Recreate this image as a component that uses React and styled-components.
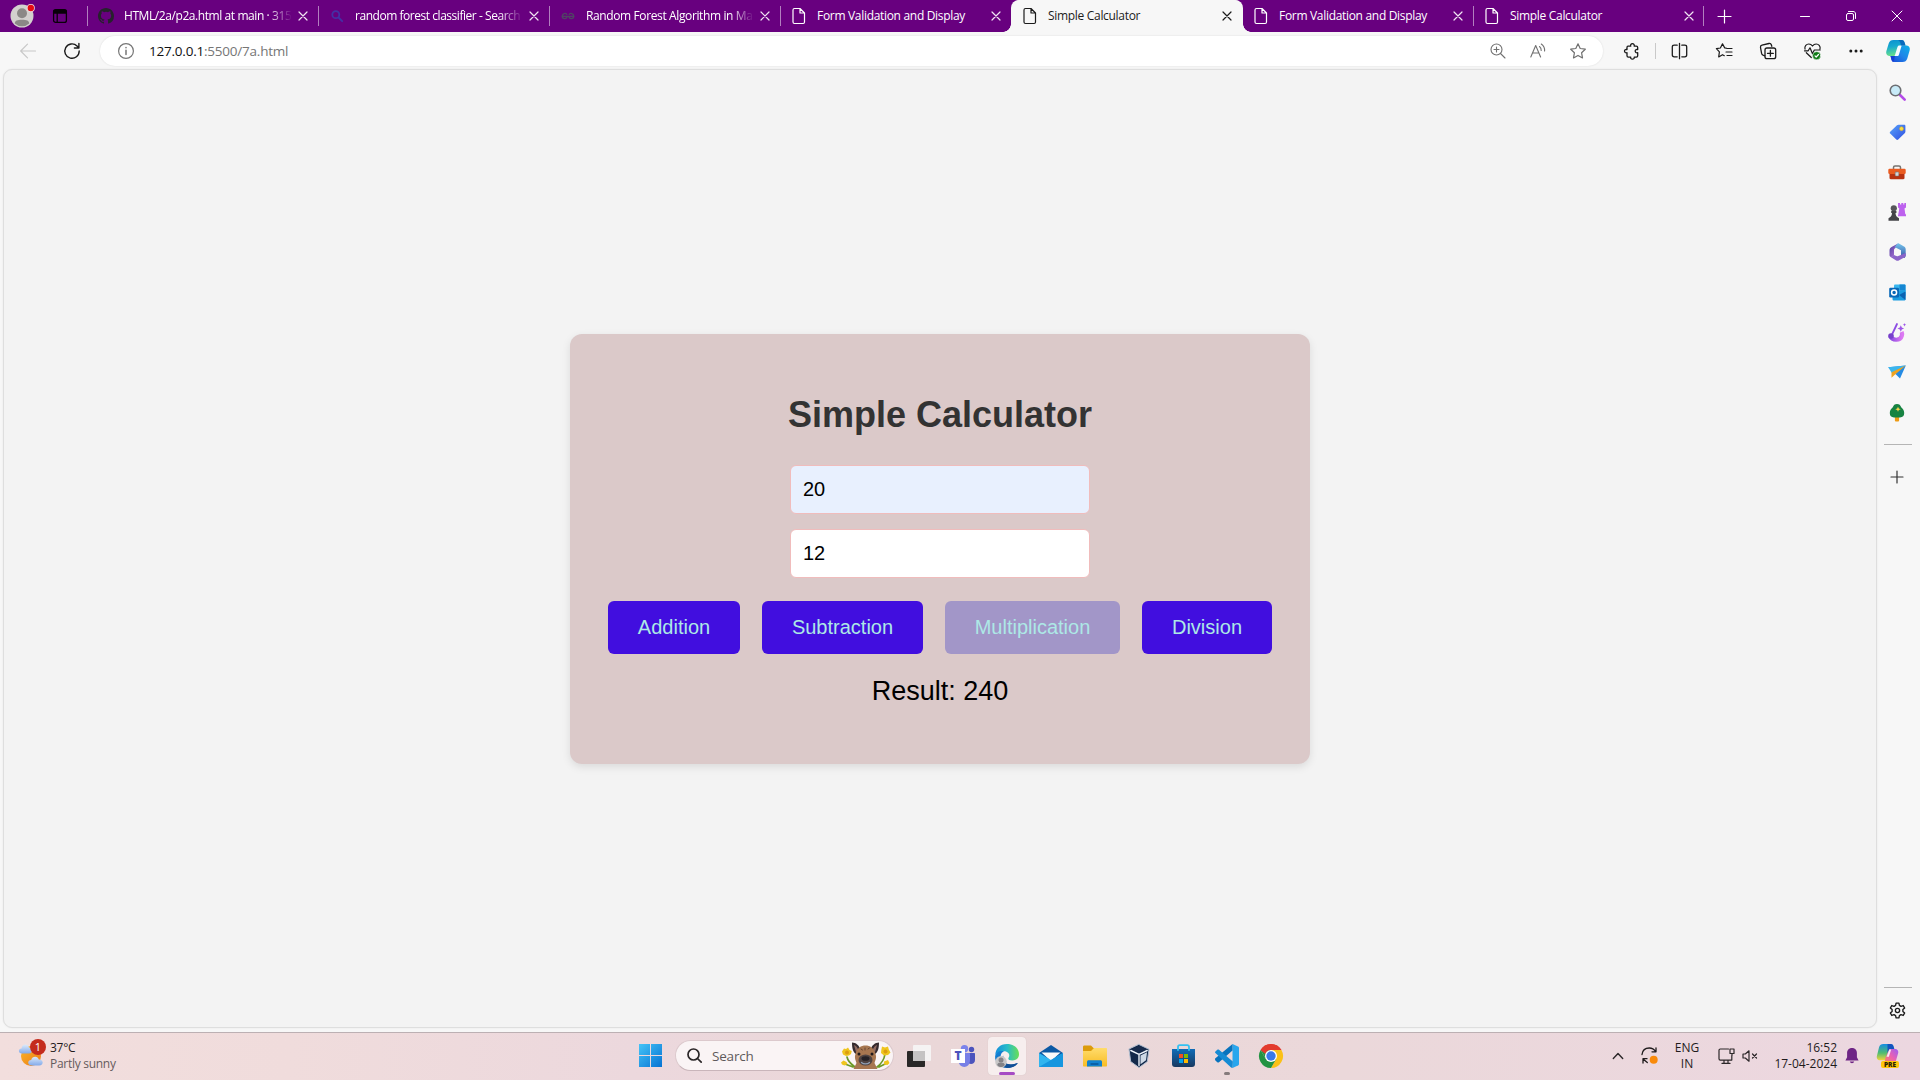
import React from "react";
import styled, { createGlobalStyle, css } from "styled-components";

const GlobalStyle = createGlobalStyle`
  * { box-sizing: border-box; }
  html, body { margin: 0; padding: 0; overflow: hidden; }
  svg { display: block; flex: none; overflow: visible; }
`;

const uiFont = `"Open Sans", "Noto Sans", sans-serif`;
const pageFont = `"Liberation Sans", Arial, sans-serif`;

const Screen = styled.div`
  width: 1920px;
  height: 1080px;
  display: flex;
  flex-direction: column;
  background: #f7f7f7;
  font-family: ${uiFont};
  overflow: hidden;
`;

/* ---------- Tab strip ---------- */
const TabStrip = styled.header`
  height: 32px;
  flex: none;
  display: flex;
  align-items: center;
  background: #68007f;
`;
const ProfileArea = styled.div`
  width: 87px;
  padding-left: 10px;
  display: flex;
  align-items: center;
  gap: 19px;
`;
const Tab = styled.div`
  position: relative;
  width: 231px;
  height: 32px;
  display: flex;
  align-items: center;
  color: ${(p) => (p.$active ? "#1b1b1b" : "#fff")};
  ${(p) => p.$divided && css`
    background: linear-gradient(#b27fbf, #b27fbf) 0 6px / 1px 20px no-repeat;
  `}
  ${(p) => p.$active && css`
    background: #f7f7f7;
    border-radius: 8px 8px 0 0;
    box-shadow: 1px 0 0 #f7f7f7;
    &::before, &::after {
      content: "";
      position: absolute;
      bottom: 0;
      width: 8px;
      height: 8px;
    }
    &::before { left: -8px; background: radial-gradient(circle at 0 0, transparent 7.5px, #f7f7f7 8px); }
    &::after { right: -9px; background: radial-gradient(circle at 100% 0, transparent 7.5px, #f7f7f7 8px); }
  `}
`;
const TabIcon = styled.span`
  width: 37px;
  padding-left: 11px;
  flex: none;
`;
const TabTitle = styled.span`
  width: 167px;
  flex: none;
  white-space: nowrap;
  font-size: 12px;
  line-height: 18px;
  letter-spacing: ${(p) => p.$track}px;
  ${(p) => p.$fade && css`mask-image: linear-gradient(90deg, #000 144px, transparent 168px);`}
`;
const TabClose = styled.span`
  width: 24px;
  display: flex;
  justify-content: center;
`;
const NewTab = styled.div`
  width: 42px;
  margin-left: -1px;
  display: flex;
  justify-content: center;
  background: linear-gradient(#b27fbf, #b27fbf) 0 50% / 1px 20px no-repeat;
  height: 32px;
  align-items: center;
`;
const WindowButtons = styled.div`
  margin-left: auto;
  display: flex;
  svg { margin: 0 15px; }
`;

/* ---------- Toolbar ---------- */
const Toolbar = styled.div`
  height: 37px;
  flex: none;
  display: flex;
  align-items: flex-start;
  padding-top: 4px;
`;
const NavButtons = styled.div`
  width: 100px;
  height: 30px;
  padding-left: 20px;
  display: flex;
  align-items: center;
  gap: 28px;
`;
const AddressBar = styled.div`
  width: 1503px;
  height: 30px;
  border-radius: 15px;
  background: #fff;
  box-shadow: 0 0 2px rgba(0, 0, 0, 0.12);
  padding: 0 17px 0 18px;
  display: flex;
  align-items: center;
`;
const Url = styled.span`
  margin-left: 15px;
  font-size: 13.5px;
  letter-spacing: -0.22px;
  color: #767676;
  b { font-weight: 400; color: #111; }
`;
const AddressActions = styled.div`
  margin-left: auto;
  display: flex;
  gap: 24px;
`;
const ToolbarActions = styled.div`
  flex: 1;
  height: 30px;
  display: flex;
  align-items: center;
  padding-left: 21px;
`;
const ToolSlot = styled.span`
  width: ${(p) => p.$w || 44}px;
`;
const Divider = styled.span`
  width: 1px;
  height: 16px;
  background: #c9c9c9;
  margin-right: 16px;
`;

/* ---------- Body ---------- */
const Body = styled.div`
  flex: 1;
  display: flex;
  min-height: 0;
`;
const Page = styled.main`
  width: 1874px;
  height: 959px;
  margin-left: 3px;
  border: 1px solid #dedede;
  border-radius: 9px;
  background: #f3f3f3;
  box-shadow: 0 0 2px rgba(0, 0, 0, 0.08);
  display: flex;
  align-items: center;
  justify-content: center;
  font-family: ${pageFont};
`;
const Card = styled.section`
  width: 740px;
  height: 430px;
  border-radius: 12px;
  background: #dbc9c9;
  box-shadow: 0 3px 8px rgba(0, 0, 0, 0.1);
  display: flex;
  flex-direction: column;
  align-items: center;
  padding-top: 60px;
`;
const Title = styled.h1`
  margin: 0 0 30px;
  font-size: 36px;
  line-height: 41px;
  font-weight: 700;
  color: #333;
`;
const NumberInput = styled.input`
  width: 300px;
  height: 49px;
  margin: 0 0 15px;
  padding: 0 12px;
  border: 1px solid #f0bcbc;
  border-radius: 6px;
  background: ${(p) => (p.$autofill ? "#e8f0fe" : "#fff")};
  font: 20px ${pageFont};
  color: #000;
  outline: none;
`;
const Operations = styled.div`
  display: flex;
  gap: 22px;
  margin-top: 8px;
`;
const OpButton = styled.button`
  height: 53px;
  padding: 0;
  width: ${(p) => p.$w}px;
  border: 0;
  border-radius: 6px;
  background: ${(p) => (p.$pressed ? "#a296c8" : "#410edf")};
  color: #ade8e6;
  font: 20px ${pageFont};
`;
const Result = styled.div`
  margin-top: 22px;
  font-size: 27px;
  line-height: 31px;
  color: #000;
`;

/* ---------- Sidebar ---------- */
const Sidebar = styled.aside`
  flex: 1;
  padding-left: 7px;
  padding-top: 11px;
  display: flex;
  flex-direction: column;
`;
const SideItem = styled.div`
  width: 28px;
  height: ${(p) => p.$h || 24}px;
  margin-left: -1px;
  margin-bottom: ${(p) => (p.$gap ?? 16)}px;
  flex: none;
  display: flex;
  align-items: center;
  justify-content: center;
`;
const SideLine = styled.div`
  width: 28px;
  height: 1px;
  flex: none;
  margin-top: ${(p) => p.$top || 0}px;
  background: #b5b5b5;
`;
const SideBottom = styled.div`
  margin-top: auto;
  height: 45px;
  display: flex;
  flex-direction: column;
  gap: 10px;
`;

/* ---------- Taskbar ---------- */
const Taskbar = styled.footer`
  height: 48px;
  flex: none;
  display: flex;
  align-items: center;
  padding-bottom: 2px;
  border-top: 1px solid #bcb0b3;
  background: linear-gradient(90deg, #f2dedd 0, #f0dcdc 15%, #ecd8dd 33%, #ead7d8 48%, #ebd8da 70%, #ecd7e0 100%);
`;
const Weather = styled.div`
  width: 639px;
  padding-left: 18px;
  display: flex;
  align-items: center;
  gap: 5px;
  height: 45px;
`;
const Stack = styled.div`
  font-size: 12px;
  line-height: 16px;
  letter-spacing: ${(p) => p.$track || 0}px;
  text-align: ${(p) => p.$align || "left"};
  color: #1f1b1c;
  white-space: nowrap;
`;
const Muted = styled.div`
  color: #655b5c;
`;
const SearchBox = styled.div`
  width: 219px;
  height: 31px;
  margin: 0 13px 0 13px;
  padding: 0 2px 0 11px;
  border-radius: 16px;
  background: #faf4f5;
  border: 1px solid #dcc9cd;
  border-bottom-color: #c9b5ba;
  display: flex;
  align-items: center;
  font-size: 13.5px;
  color: #5f5a5b;
  svg:last-child { margin-left: auto; }
  span { margin-left: 10px; letter-spacing: -0.2px; }
`;
const Apps = styled.div`
  display: flex;
  align-items: center;
  gap: 6px;
  margin-left: -7px;
`;
const AppTile = styled.div`
  position: relative;
  width: 38px;
  height: 38px;
  display: flex;
  align-items: center;
  justify-content: center;
  border-radius: 4px;
  ${(p) => p.$active && css`background: #f7eeee; box-shadow: 0 0 1px #c8b9b9;`}
  ${(p) => p.$bar && css`
    &::after {
      content: "";
      position: absolute;
      bottom: 0;
      left: 50%;
      width: ${p.$bar}px;
      height: 3px;
      margin-left: ${-p.$bar / 2}px;
      border-radius: 2px;
      background: ${p.$active ? "#a64bc4" : "#857b7c"};
    }
  `}
`;
const Tray = styled.div`
  margin-left: auto;
  display: flex;
  align-items: center;
  padding-right: 20px;
`;
const TrayItem = styled.div`
  width: ${(p) => p.$w}px;
  margin-right: ${(p) => p.$gap || 0}px;
  display: flex;
  justify-content: ${(p) => (p.$end ? "flex-end" : "center")};
`;
const PreBadge = styled.span`
  position: absolute;
  left: 5px;
  bottom: -1px;
  width: 18px;
  height: 7px;
  border-radius: 2px;
  background: #ffc60b;
  color: #2b2100;
  font-size: 6.5px;
  font-weight: 800;
  line-height: 7px;
  text-align: center;
`;
const BadgeHost = styled.div`
  position: relative;
  width: 24px;
  height: 23px;
`;
const WeatherIcon = styled.div`
  position: relative;
  width: 27px;
  height: 29px;
  margin-bottom: 5px;
  svg { margin-top: 5px; }
`;
const Count = styled.span`
  position: absolute;
  top: 0;
  left: 12px;
  width: 16px;
  height: 16px;
  border-radius: 50%;
  background: #c42b1c;
  color: #fff;
  font-size: 11px;
  line-height: 16px;
  text-align: center;
`;

/* ---------- Icons ---------- */
const Svg = ({ s = 16, w, h, vb, children, ...rest }) => (
  <svg width={w || s} height={h || s} viewBox={vb || `0 0 ${w || s} ${h || s}`} fill="none" strokeLinecap="round" strokeLinejoin="round" {...rest}>
    {children}
  </svg>
);
const Line = ({ children, c = "#222", sw = 1.2, ...r }) => (
  <Svg stroke={c} strokeWidth={sw} {...r}>{children}</Svg>
);
const CloseIcon = ({ c = "#f0e4f3", s = 8, sw = 1.2 }) => (
  <Line s={s} vb="0 0 8 8" c={c} sw={sw}><path d="M0 0 8 8M8 0 0 8" /></Line>
);
const FileIcon = ({ c = "#fff" }) => (
  <Line w={16} h={16} c={c} sw={1.2}>
    <path d="M3.500.5h5.500L13.500 5v9c0 .9-.5 1.500-1.400 1.500H3.500c-.9 0-1.500-.6-1.500-1.500V2c0-.9.600-1.500 1.500-1.500ZM9 .5V5h4.500" />
  </Line>
);
const GithubIcon = () => (
  <Svg s={16} vb="0 0 16 16">
    <path fill="#26222c" d="M8 0C3.580 0 0 3.580 0 8c0 3.540 2.290 6.530 5.470 7.590.4.070.550-.170.550-.380v-1.490c-2.010.370-2.530-.490-2.690-.940-.090-.230-.480-.940-.820-1.130-.280-.150-.680-.520-.010-.530.630-.010 1.080.580 1.230.820.720 1.210 1.870.870 2.330.660.070-.520.280-.870.510-1.070-1.780-.200-3.640-.890-3.640-3.950 0-.870.310-1.590.820-2.150-.080-.200-.360-1.020.080-2.120 0 0 .670-.210 2.200.820a7.420 7.420 0 0 1 4 0c1.530-1.040 2.200-.820 2.200-.820.440 1.100.160 1.920.080 2.120.510.560.820 1.270.820 2.150 0 3.070-1.870 3.750-3.650 3.950.290.250.540.730.540 1.480v2.200c0 .210.150.460.550.380A8.010 8.010 0 0 0 16 8c0-4.420-3.580-8-8-8Z" />
  </Svg>
);
const BingIcon = () => (
  <Line s={16} c="#4430a5" sw={1.8}><circle cx="6.800" cy="6.700" r="3.500" /><path d="m9.500 9.500 3.700 3.700" /></Line>
);
const GeeksIcon = () => (
  <Line s={16} c="#504464" sw={1.300}>
    <path d="M2 8.300h12M6.800 6.300C5.600 4.900 2.600 5.200 2.200 8c.100 3.500 4.700 3.500 4.900.300M9.200 6.300c1.200-1.400 4.200-1.100 4.600 1.700-.100 3.500-4.700 3.500-4.900.300" />
  </Line>
);
const Avatar = () => (
  <Svg w={24} h={24}>
    <circle cx="12" cy="12" r="11.500" fill="#d3d0ce" />
    <circle cx="12" cy="9.300" r="5" fill="#8b8886" />
    <path d="M4.800 19.500c0-2.800 2.600-3.700 7.200-3.700s7.200.900 7.200 3.700a10.600 10.600 0 0 1-14.400 0Z" fill="#8b8886" />
    <circle cx="20.800" cy="4" r="4" fill="#f4dfe4" />
    <circle cx="20.800" cy="4" r="3.200" fill="#e60b12" />
  </Svg>
);
const WorkspaceIcon = () => (
  <Line s={14} c="#090009" sw={1.300}>
    <rect x=".6" y=".6" width="12.800" height="12.800" rx="2" />
    <path d="M1 1.500h12v2.500H1z" fill="#090009" /><path d="M4.200 4.500V13" />
  </Line>
);
const CopilotIcon = () => (
  <Svg w={24} h={22}>
    <defs>
      <linearGradient id="cpA" x1="0" y1="0" x2=".2" y2="1"><stop stopColor="#0b8fd0" /><stop offset=".45" stopColor="#17a9cf" /><stop offset="1" stopColor="#66e08b" /></linearGradient>
      <linearGradient id="cpB" x1="1" y1="0" x2="0" y2="1"><stop stopColor="#0bb0e8" /><stop offset=".5" stopColor="#2085e8" /><stop offset="1" stopColor="#1746d8" /></linearGradient>
    </defs>
    <path d="M12 0h3.500c2 0 2.700 1 3.200 3l.800 2.500H15L10.500 16H4c-3 0-4.400-2.200-3.600-5L2.700 3.500C3.500 1 5 0 7.500 0Z" fill="url(#cpA)" />
    <path d="M12 22H8.500c-2 0-2.700-1-3.200-3l-.800-3H9L13.800 5.500H20c3 0 4.400 2.200 3.600 5l-2.300 8C20.500 21 19 22 16.500 22Z" fill="url(#cpB)" />
    <path d="M14.500 5.500h-1.200c-1 0-1.500.600-1.900 1.800L9 15c-.2.700-.5 1-1 1h3.200c1 0 1.500-.600 1.800-1.600l2.300-7.700c.2-.7.500-1.200 1-1.200Z" fill="#f7fbff" />
    <path d="M12 0h3.500c2 0 2.700 1 3.200 3l.800 2.500H15c-.6-2.500-1-5-3-5.500Z" fill="#0869bd" />
    <path d="M4.500 16H9c-.8 3-1 5-1.500 6-1.300-.2-1.800-1.200-2.200-3Z" fill="#173ed3" />
  </Svg>
);
const HeartIcon = () => (
  <Line s={17} c="#1b1b1b" sw={1.200}>
    <path d="M1 6.200C.2 2.800 2.600 1 4.800 1c1.700 0 2.900.900 3.700 2 .8-1.100 2-2 3.700-2C14.400 1 16.800 2.800 16 6.200M2.300 9.700l5 4.800M.5 7.800h3.700L6 4.800l2.500 6L10.300 7h5.900" />
    <circle cx="12.600" cy="12.700" r="4" fill="#0f7b16" stroke="#f7f7f7" strokeWidth=".5" />
    <path d="m11 12.800 1.200 1.200 2.300-2.500" stroke="#fff" />
  </Line>
);
const PuzzleIcon = () => (
  <Line w={16} h={16} c="#1b1b1b" sw={1.300}>
    <path d="M4 3.200h2.700C6.300 1.700 7.100.7 8.400.7s2.200 1 1.800 2.500h2.100c.900 0 1.400.5 1.400 1.400v2c-1.600-.4-2.500.3-2.500 1.500s.900 2 2.500 1.600v3.100c0 .9-.5 1.400-1.400 1.400h-2.100c.3 1.200-.6 2-1.800 2s-2-.8-1.700-2H4.400c-.9 0-1.400-.5-1.400-1.400V9.700C1.500 10.100.5 9.300.5 8.100S1.500 6.200 3 6.600V4.600c0-.9.400-1.400 1-1.400Z" />
  </Line>
);
const GearIcon = () => (
  <Line s={17} vb="0 0 24 24" c="#1b1b1b" sw={1.900}>
    <path d="M10 1.500h4l.7 3.300 2.200 1.300 3.200-1.100 2 3.500-2.500 2.200v2.600l2.500 2.200-2 3.500-3.200-1.100-2.200 1.300-.7 3.300h-4l-.7-3.300-2.200-1.300L3.900 19l-2-3.500 2.500-2.200v-2.600L1.900 8.500l2-3.500 3.200 1.100 2.200-1.300Z" />
    <circle cx="12" cy="12" r="3" />
  </Line>
);

const SearchColor = () => (
  <Svg s={17}>
    <path d="m11 11 4.700 4.700" stroke="#b44be8" strokeWidth="2.600" />
    <circle cx="6.500" cy="6.500" r="5.300" fill="#c8ebf8" stroke="#6d6f73" strokeWidth="1.600" />
  </Svg>
);
const TagColor = () => (
  <Svg s={17}>
    <defs><linearGradient id="tag" x1="0" y1="0" x2="1" y2="1"><stop stopColor="#58a4fb" /><stop offset="1" stopColor="#304ee0" /></linearGradient></defs>
    <path d="M9.500.8h5.700c.8 0 1.200.4 1.200 1.200v5.600c0 .5-.2 1-.5 1.300l-6.700 6.700c-.6.600-1.300.6-1.900 0L1.200 9.600c-.6-.6-.6-1.300 0-1.900L8 1.300c.4-.3.9-.5 1.500-.5Z" fill="url(#tag)" />
    <circle cx="12.500" cy="4.700" r="2" fill="#f9df45" stroke="#d5a72e" strokeWidth=".5" />
  </Svg>
);
const ToolboxColor = () => (
  <Svg w={18} h={15}>
    <path d="M5.500 4V2.500c0-.9.500-1.500 1.500-1.500h4c1 0 1.500.600 1.500 1.500V4" stroke="#77736f" strokeWidth="1.500" />
    <path d="M1.500 8h15v5c0 .700-.5 1.200-1.200 1.200H2.700c-.7 0-1.200-.5-1.200-1.200Z" fill="#b83210" />
    <rect x=".3" y="3.700" width="17.400" height="5.200" rx="1.200" fill="#ea5b20" />
    <rect x="7.200" y="7" width="3.600" height="4" rx=".8" fill="#d1d5d8" stroke="#73777a" strokeWidth=".5" />
  </Svg>
);
const ChessColor = () => (
  <Svg w={18} h={18}>
    <path d="M10 0h2v1.500h1.300V0h2v1.500h1V0H18v4.500l-1.500 1 .8 5.700H18v2H9.900L10.500 10l.8-4.500-1.300-1Z" fill="#bd62ee" />
    <circle cx="5.800" cy="5.300" r="3.100" fill="#56565a" />
    <path d="M3.200 8h5.200v2H7.500c.1 2 .7 3.200 2 4.300l1.500 1v2.500H.5v-2.500L2 14.300c1.300-1.100 2-2.300 2-4.300h-.8Z" fill="#444448" />
  </Svg>
);
const M365Color = () => (
  <Svg w={17} h={18}>
    <defs>
      <linearGradient id="mA" x1="0" y1="0" x2="0" y2="1"><stop stopColor="#75c6ed" /><stop offset="1" stopColor="#3654a5" /></linearGradient>
      <linearGradient id="mB" x1="0" y1="0" x2="1" y2="1"><stop stopColor="#4c3f9d" /><stop offset="1" stopColor="#bc78df" /></linearGradient>
    </defs>
    <path d="M9.500.2 3 3.700C1.300 4.700.5 5.700.5 7.500V12c0 1 .500 1.800 1.600 2.300L5 12.600V7.300c0-1 .4-1.700 1.400-2.200Z" fill="url(#mB)" />
    <path d="m9.500.2 5.500 3.300c1.200.7 1.700 1.700 1.700 3v6c0 1-.5 1.800-1.500 2.400L12 12.500V7.300L5.500 4C7 3.300 7 1 9.500.2Z" fill="url(#mA)" />
    <path d="m2 14.300 4.800 2.900c1.200.7 2.200.7 3.400 0l5-2.700c1-.600 1.500-1.400 1.500-2.400v-2L9.300 13c-1 .5-1.800.3-2.700-.2L5 12Z" fill="#8b64c8" />
  </Svg>
);
const OutlookColor = () => (
  <Svg w={17} h={17}>
    <rect x="5" y=".5" width="11.500" height="12" rx="1" fill="#39b6ee" />
    <path d="M10.500.5h5c.7 0 1 .3 1 1v5h-6Z" fill="#1686d2" />
    <path d="M3.500 8.500 16.500 6v9c0 1-.5 1.500-1.500 1.500H5c-1 0-1.500-.5-1.500-1.500Z" fill="#1b9ce0" />
    <path d="m10 11 6.500 5V7.500Z" fill="#0b63b2" />
    <rect x=".2" y="3.700" width="9.800" height="9.800" rx="1.200" fill="#0868b8" />
    <circle cx="5.100" cy="8.600" r="2.500" stroke="#fff" strokeWidth="1.500" />
  </Svg>
);
const DesignerColor = () => (
  <Svg w={18} h={18}>
    <defs><linearGradient id="dg"><stop stopColor="#8849e1" /><stop offset="1" stopColor="#dd79f2" /></linearGradient></defs>
    <path d="M2.300 13c2 5 10 5 11.500-.2.700-2-.2-4-.2-4" stroke="url(#dg)" strokeWidth="4.200" strokeLinecap="butt" />
    <path d="M9 1 4 11.500" stroke="#8c4ce3" strokeWidth="1.800" />
    <circle cx="3" cy="13" r="2.800" fill="#7740cb" />
    <path d="m12.800 2.200 1 2.300 2.300 1-2.300 1-1 2.300-1-2.300-2.300-1 2.300-1ZM16.500 0l.5 1.200 1.200.5-1.200.500-.5 1.200-.5-1.200-1.200-.5L16 1.200Z" fill="#9e55e8" />
  </Svg>
);
const DropColor = () => (
  <Svg w={18} h={14}>
    <path d="M.2 2.300 17.800.5 12 13.500 8.500 10Z" fill="#258be4" />
    <path d="M.2 2.300 17.800.5 3.800 8Z" fill="#3bb6ee" />
    <path d="M17.800.5 3.500 7.200v5.500l3-2.600Z" fill="#eda321" />
  </Svg>
);
const TreeColor = () => (
  <Svg w={16} h={18} vb="0 -0.7 16 18">
    <rect x="5.900" y="12" width="4.200" height="5.800" rx="1" fill="#ed9b15" />
    <path d="M8 .3c2.300 0 3.500 1.200 4.200 3.300 1.800 1.400 3 3.400 3 5.800 0 3-1.400 4.300-4.200 4.300H5c-2.800 0-4.200-1.300-4.200-4.300 0-2.400 1.200-4.400 3-5.800C4.500 1.500 5.700.3 8 .3Z" fill="#178342" />
    <path d="m9 3 .8 1.800 1.900.7-1.900.8L9 8l-.8-1.700-1.900-.8 1.900-.7Z" fill="#f8d54c" />
  </Svg>
);

const WeatherArt = () => (
  <Svg w={26} h={24}>
    <defs>
      <linearGradient id="sun" x1="0" y1="0" x2="1" y2="1"><stop stopColor="#f9b629" /><stop offset="1" stopColor="#ed7b16" /></linearGradient>
      <linearGradient id="cl" x1="0" y1="0" x2="0" y2="1"><stop stopColor="#dbeafb" /><stop offset="1" stopColor="#83aaea" /></linearGradient>
    </defs>
    <circle cx="13" cy="12" r="10" fill="url(#sun)" />
    <path d="M4 9.500c-4 0-4-5-.5-5C4-.5 10-.5 11 3.500c4 .2 4 6 0 6Z" fill="url(#cl)" />
    <path d="M14 21.500c-5 0-4.800-5.500-.8-5.500.8-4.500 7-4.300 7.600-.5 5-.3 5.200 6 .5 6Z" fill="url(#cl)" />
  </Svg>
);
const WindowsIcon = () => (
  <Svg s={23}>
    <defs><linearGradient id="win" x1="0" y1="0" x2="1" y2="1" gradientUnits="objectBoundingBox"><stop stopColor="#45c4f7" /><stop offset="1" stopColor="#0672d3" /></linearGradient></defs>
    <path d="M0 0h11v11H0zM12 0h11v11H12zM0 12h11v11H0zM12 12h11v11H12z" fill="url(#win)" />
  </Svg>
);
const Hyena = () => (
  <Svg w={50} h={27}>
    <path d="M6 15c1 5 4 7 8 10M4 22l8 3M44 12c-1 7-4 10-8 13M46 21l-8 4" stroke="#6c9a27" strokeWidth="1.700" />
    <path d="M3 6.500 5 7l2-1.500L8.500 8l2.300 1-.8 3-2 1.500L5 14l-3-1.500L1 9.500ZM0 20.500l2.500-2 3 1.500 1 2-3 1.500-2.500-1ZM41 4.500l3 1L47 4.500l.8 3 1.700 3-2.500 2.500-4 .5-3-2.500.3-3ZM43 19.500l4-1.500 1.500 3-2 2-3.500-.5Z" fill="#efc51e" />
    <circle cx="6" cy="10.500" r="2" fill="#dc9d10" /><circle cx="44.500" cy="9.500" r="2" fill="#dc9d10" />
    <path d="M11 .5c4 0 7 3 8 6h11c1-3 4-6 8-6 0 6-1 9.500-4 11.500H15c-3-2-4-5.500-4-11.500Z" fill="#352a2e" />
    <path d="M13 3c2 .5 4 3 4.500 6L15 10ZM36 3c-2 .5-4 3-4.500 6l2.500 1Z" fill="#906a62" />
    <path d="M14.500 12C16 6 20 3.500 24.500 3.500S33 6 34.500 12c1.500 4-.5 7-1 9l3 6h-24l3-6c-.5-2-2.500-5-1-9Z" fill="#a77650" />
    <ellipse cx="24.500" cy="18" rx="7" ry="5.500" fill="#504443" />
    <ellipse cx="24.500" cy="16.500" rx="4" ry="2.300" fill="#252126" />
    <circle cx="18" cy="12" r="1.500" fill="#21191a" /><circle cx="31" cy="12" r="1.500" fill="#21191a" />
    <path d="M20.500 20.500c2 1.800 6 1.800 8 0" stroke="#90a0b5" strokeWidth="1.200" />
    <path d="m20 7 1.500 1M27 7l1.500-1M24 6v2" stroke="#664332" />
  </Svg>
);
const TaskViewIcon = () => (
  <Svg w={24} h={22}>
    <rect x="0" y="6" width="18" height="16" rx="1" fill="#292827" />
    <rect x="6" y="0" width="18" height="16" rx="1" fill="#f5f3f3" />
    <path d="M6 6h12v10H7c-.7 0-1-.3-1-1Z" fill="#c5c3c3" />
  </Svg>
);
const TeamsBox = styled.div`
  position: relative;
  width: 24px;
  height: 22px;
`;
const TeamsLetter = styled.span`
  position: absolute;
  left: 0;
  top: 4px;
  width: 14px;
  height: 14px;
  background: #fff;
  color: #4b53bc;
  font-size: 12px;
  font-weight: 800;
  line-height: 14px;
  text-align: center;
`;
const TeamsIcon = () => (
  <TeamsBox>
    <Svg w={24} h={22}>
      <circle cx="20.500" cy="4.500" r="2.700" fill="#4c54bd" /><circle cx="13.500" cy="3.800" r="3.700" fill="#7b83eb" />
      <path d="M15 8h8c.7 0 1 .3 1 1v6c0 5-7 5-8 1Z" fill="#4c54bd" />
      <path d="M8 8h10c.6 0 1 .4 1 1v6c0 9-11 9-11.500 1Z" fill="#777fe6" />
    </Svg>
    <TeamsLetter>T</TeamsLetter>
  </TeamsBox>
);
const EdgeIcon = () => (
  <Svg s={24}>
    <defs>
      <linearGradient id="eA" x1="0" y1=".4" x2="1" y2=".4"><stop stopColor="#168ddb" /><stop offset=".5" stopColor="#28bcc9" /><stop offset="1" stopColor="#69df55" /></linearGradient>
      <linearGradient id="eB" x1="0" y1="0" x2="1" y2="1"><stop stopColor="#1489df" /><stop offset="1" stopColor="#0b468f" /></linearGradient>
    </defs>
    <path d="M.3 11.500C.3 4.500 5 0 12 0c7.500 0 12 4.800 12 10.200 0 4-3 6.300-6.700 6.300-3 0-4-1-4-2 0-.8 1-1.300 1-3 0-2.500-2.500-4.200-5.300-4.200C4.700 7.300.5 10 .3 11.500Z" fill="url(#eA)" />
    <path d="M.1 12.500C.7 8.300 5 6.200 9 7.300c-3.500 1.800-4 5-2.600 8 1.700 4.200 7 6.500 14.600 4.200l1.200.3C19.500 23 16 24 12 24 5 24-.3 18.500.1 12.500Z" fill="url(#eB)" />
    <path d="M8.500 11.500c-2 5 2 9.500 8.500 9 2.200-.2 3.800-.8 5-1.500.5-.3.900.2.600.6C20 23 16.500 24.300 12 23.500 6 21 4.500 15 8.500 11.500Z" fill="#114f96" />
    <circle cx="6" cy="17.800" r="5.800" fill="#c8c7c8" />
    <circle cx="6" cy="16" r="2.500" fill="#858387" /><path d="M2.200 21c0-3.300 7.600-3.300 7.600 0-2 2.700-5.600 2.700-7.600 0Z" fill="#858387" />
  </Svg>
);
const MailIcon = () => (
  <Svg w={24} h={22}>
    <path d="M0 8 12 0l12 8v6H0Z" fill="#0c59a4" />
    <path d="M2.500 7.500h19L12 16Z" fill="#fafafa" />
    <path d="M0 8v14h24V8l-12 7Z" fill="#31b5ef" /><path d="M0 22 12 15 24 8v14Z" fill="#1696df" />
  </Svg>
);
const FolderIcon = () => (
  <Svg w={24} h={22}>
    <defs><linearGradient id="fo" x1="0" y1="0" x2="0" y2="1"><stop stopColor="#ffdc6c" /><stop offset="1" stopColor="#f8bc24" /></linearGradient></defs>
    <path d="M0 2c0-1 .5-1.500 1.500-1.500H8L10.500 3H22v6H0Z" fill="#dc9b0b" />
    <path d="M0 6h8l3-3h12c.7 0 1 .3 1 1v16.500c0 .7-.3 1-1 1H1c-.7 0-1-.3-1-1Z" fill="url(#fo)" />
    <path d="M4 21.500V17c0-1.200.6-1.800 1.800-1.800h11.400c1.200 0 1.800.6 1.800 1.800v4.500Z" fill="#1182cf" /><path d="M8 19h7" stroke="#07579a" strokeWidth="1.300" />
  </Svg>
);
const VBoxIcon = () => (
  <Svg w={22} h={24}>
    <path d="m11 .5 10 4.800-1.700 12.300-8.300 6-8.300-6L1 5.300Z" fill="#13294a" stroke="#b1bed0" />
    <path d="m11 2 7.500 3.500L11 9 3.500 5.500Z" fill="#182c4d" />
    <path d="M2.800 6.500 11 10.300l8.200-3.800M11 10.300V21.500" stroke="#edf3fa" strokeWidth="1.400" />
    <path d="m12.500 11.500 6.500-3.200-1 8-5.500 4Z" fill="#ced9e6" />
  </Svg>
);
const StoreIcon = () => (
  <Svg w={23} h={24}>
    <defs><linearGradient id="st" x1="0" y1="0" x2="0" y2="1"><stop stopColor="#116cb7" /><stop offset="1" stopColor="#183960" /></linearGradient></defs>
    <path d="M0 5h23v15c0 2-1 3-3 3H3c-2 0-3-1-3-3Z" fill="url(#st)" />
    <path d="M6 6V3c0-1.200.6-1.800 1.800-1.800h7.400c1.200 0 1.800.6 1.800 1.800v3" stroke="#35c1f1" strokeWidth="1.800" />
    <path d="M7 10h4v4H7z" fill="#f25022" /><path d="M12 10h4v4h-4z" fill="#7fba00" /><path d="M7 15h4v4H7z" fill="#00a4ef" /><path d="M12 15h4v4h-4z" fill="#ffb900" />
  </Svg>
);
const CodeIcon = () => (
  <Svg s={24} vb="0 0 24 24">
    <path d="m17.500 0 5.500 2.400c.6.300 1 .8 1 1.500v16.200c0 .7-.4 1.200-1 1.500L17.500 24Z" fill="#28a6ed" />
    <path d="M17.500 0 3.200 13.800.4 16.200c-.5-.5-.5-1.100-.3-1.600L17.500 0v6.500L4 18.300c-.5.400-1.200.4-1.700 0l-1.900-1.700c-.5-.5-.5-1.100 0-1.600Z" fill="#0873bd" />
    <path d="m17.500 24 .3-6.500L4 5.700c-.5-.4-1.200-.4-1.700 0L.4 7.400c-.5.500-.5 1.200 0 1.700L15.800 23.200c.5.500 1.100.8 1.700.8Z" fill="#158bd4" />
  </Svg>
);
const ChromeIcon = () => (
  <Svg s={24}>
    <path d="M12 12 1.600 6A12 12 0 0 1 22.400 6Z" fill="#e33b2e" />
    <path d="M12 12V6h10.400A12 12 0 0 1 12 24l5.200-9Z" fill="#fbc116" />
    <path d="m12 12-5.200 3L1.600 6A12 12 0 0 0 12 24l5.200-9Z" fill="#229342" />
    <path d="M1.600 6 6.800 15 12 6Z" fill="#229342" /><path d="M1.600 6A12 12 0 0 1 12 0a12 12 0 0 1 10.400 6H12a6 6 0 0 0-5.600 4Z" fill="#e33b2e" />
    <circle cx="12" cy="12" r="6" fill="#fff" /><circle cx="12" cy="12" r="4.700" fill="#3979e8" />
  </Svg>
);
const CopilotPreview = () => (
  <BadgeHost>
    <Svg w={23} h={20} vb="0 0 24 22">
      <defs>
        <linearGradient id="ppA" x1="0" y1="0" x2="0" y2="1"><stop stopColor="#168de2" /><stop offset=".55" stopColor="#50bc70" /><stop offset="1" stopColor="#f4d53c" /></linearGradient>
        <linearGradient id="ppB" x1="1" y1="0" x2="0" y2="1"><stop stopColor="#9b5ff4" /><stop offset=".5" stopColor="#ed62af" /><stop offset="1" stopColor="#fa8c55" /></linearGradient>
      </defs>
      <path d="M12 0h3.500c2 0 2.700 1 3.200 3l.8 2.500H15L10.500 18H4c-3 0-4.400-2.200-3.600-5L2.700 3.500C3.500 1 5 0 7.500 0Z" fill="url(#ppA)" />
      <path d="M12 22H8.500l1-6L13.800 5.500H20c3 0 4.400 2.200 3.600 5l-2.300 8C20.500 21 19 22 16.500 22Z" fill="url(#ppB)" />
      <path d="M12 0h3.500c2 0 2.700 1 3.200 3l.8 2.500h-5.700L12 10Z" fill="#1454bf" />
      <path d="m14 6-3 8h2.500L16 6Z" fill="#f9eaf4" />
    </Svg>
    <PreBadge>PRE</PreBadge>
  </BadgeHost>
);

const tabs = [
  { title: "HTML/2a/p2a.html at main · 315", icon: <GithubIcon />, divided: true, fade: true, track: -0.42 },
  { title: "random forest classifier - Search", icon: <BingIcon />, divided: true, fade: true, track: -0.46 },
  { title: "Random Forest Algorithm in Ma", icon: <GeeksIcon />, divided: true, fade: true, track: -0.38 },
  { title: "Form Validation and Display", icon: <FileIcon />, divided: true },
  { title: "Simple Calculator", icon: <FileIcon c="#1b1b1b" />, active: true },
  { title: "Form Validation and Display", icon: <FileIcon /> },
  { title: "Simple Calculator", icon: <FileIcon />, divided: true },
];
const sideIcons = [SearchColor, TagColor, ToolboxColor, ChessColor, M365Color, OutlookColor, DesignerColor, DropColor, TreeColor];
const operations = [
  { label: "Addition", w: 132 },
  { label: "Subtraction", w: 161 },
  { label: "Multiplication", w: 175, pressed: true },
  { label: "Division", w: 130 },
];

export default function App() {
  return (
    <Screen>
      <GlobalStyle />
      <TabStrip>
        <ProfileArea><Avatar /><WorkspaceIcon /></ProfileArea>
        {tabs.map((t, i) => (
          <Tab key={i} $active={t.active} $divided={t.divided}>
            <TabIcon>{t.icon}</TabIcon>
            <TabTitle $fade={t.fade} $track={t.track ?? -0.31}>{t.title}</TabTitle>
            <TabClose><CloseIcon c={t.active ? "#1b1b1b" : undefined} /></TabClose>
          </Tab>
        ))}
        <NewTab><Line s={13} c="#fff" sw={1.200}><path d="M6.500 0v13M0 6.500h13" /></Line></NewTab>
        <WindowButtons>
          <Line s={16} c="#fff" sw={1}><path d="M3.500 8.500h9" /></Line>
          <Line s={16} c="#fff" sw={1}><rect x="3.500" y="5.500" width="7" height="7" rx="1.500" /><path d="M5.500 3.500h4.500c1.700 0 2.500.8 2.500 2.500v4.500" /></Line>
          <Line s={16} c="#fff" sw={1}><path d="m3 3 10 10M13 3 3 13" /></Line>
        </WindowButtons>
      </TabStrip>

      <Toolbar>
        <NavButtons>
          <Line s={16} c="#c8c8c8"><path d="M15.500 8H.7M7.500 1.200.7 8l6.800 6.800" /></Line>
          <Line s={16} c="#1b1b1b" sw={1.400}><path d="M15.200 8A7.200 7.200 0 1 1 13 2.900L14.800 4.800M14.900.5v4.500h-4.500" /></Line>
        </NavButtons>
        <AddressBar>
          <Line s={16} c="#767676" sw={1.200}><circle cx="8" cy="8" r="7.400" /><path d="M8 7.200v4.200M8 4.500v.2" strokeWidth={1.500} /></Line>
          <Url><b>127.0.0.1</b>:5500/7a.html</Url>
          <AddressActions>
            <Line s={16} c="#707070" sw={1.100}><circle cx="6.500" cy="6.500" r="5.500" /><path d="m10.500 10.500 4.500 4.500M4 6.500h5M6.500 4v5" /></Line>
            <Line s={16} c="#707070" sw={1.100}><path d="M.8 14 5.700 2.500 10.600 14M2.500 10h6.400M9.500 3.500c1.300 1 1.800 2.300 1.700 4M11.300 1c2.300 1.600 3.500 4 3.300 7" /></Line>
            <Line s={16} c="#707070" sw={1.200}><path d="m8 .8 2.200 4.700 5.100.7-3.700 3.600.9 5.100L8 12.400l-4.500 2.500.9-5.100L.7 6.200l5.100-.7Z" /></Line>
          </AddressActions>
        </AddressBar>
        <ToolbarActions>
          <ToolSlot $w={31}><PuzzleIcon /></ToolSlot>
          <Divider />
          <ToolSlot><Line s={16} c="#1b1b1b" sw={1.300}><path d="M5.200 2.200H2.200C1 2.200.3 2.800.3 4v8c0 1.200.7 1.800 1.900 1.800h3M9.800 2.200h3c1.200 0 1.900.6 1.900 1.800v8c0 1.200-.7 1.800-1.900 1.800h-3M7.500.3v15.400" /></Line></ToolSlot>
          <ToolSlot><Line s={16} c="#1b1b1b" sw={1.200}><path d="M10.200 5.100 8.700 4.900 6.500.8 4.400 5l-4 .7 3 3.200-.7 5L6.500 11.700l1.800 1M11 5.500h5M10 9h6M11 12.500h5" /></Line></ToolSlot>
          <ToolSlot><Line s={16} c="#1b1b1b" sw={1.300}><rect x="5" y="5" width="10.700" height="10.700" rx="2" /><path d="M10.400 7.500v5.700M7.500 10.400h5.800M4.800 12.800 3 12.200c-.8-.3-1.200-1-1.400-1.800L.5 4.500C.3 3.300.8 2.500 2 2.200L9 .5c1.200-.2 2 .2 2.300 1.300l.5 1.500" /></Line></ToolSlot>
          <ToolSlot><HeartIcon /></ToolSlot>
          <ToolSlot $w={38}><Svg s={16}><g fill="#1b1b1b"><circle cx="2.800" cy="8" r="1.500" /><circle cx="8" cy="8" r="1.500" /><circle cx="13.200" cy="8" r="1.500" /></g></Svg></ToolSlot>
          <CopilotIcon />
        </ToolbarActions>
      </Toolbar>

      <Body>
        <Page>
          <Card>
            <Title>Simple Calculator</Title>
            <NumberInput $autofill defaultValue="20" />
            <NumberInput defaultValue="12" />
            <Operations>
              {operations.map((o) => <OpButton key={o.label} $w={o.w} $pressed={o.pressed}>{o.label}</OpButton>)}
            </Operations>
            <Result>Result: 240</Result>
          </Card>
        </Page>
        <Sidebar>
          {sideIcons.map((Icon, i) => <SideItem key={i}><Icon /></SideItem>)}
          <SideLine $top={4} />
          <SideItem $h={63} $gap={0}><Line s={12} c="#333"><path d="M6 0v12M0 6h12" /></Line></SideItem>
          <SideBottom>
            <SideLine />
            <SideItem $gap={0}><GearIcon /></SideItem>
          </SideBottom>
        </Sidebar>
      </Body>

      <Taskbar>
        <Weather>
          <WeatherIcon><WeatherArt /><Count>1</Count></WeatherIcon>
          <Stack $track={-0.28}>37°C<Muted>Partly sunny</Muted></Stack>
        </Weather>
        <WindowsIcon />
        <SearchBox>
          <Line s={15} c="#2a2627" sw={1.700}><circle cx="6.500" cy="6.500" r="5.500" /><path d="m10.500 10.500 3.700 3.700" /></Line>
          <span>Search</span>
          <Hyena />
        </SearchBox>
        <Apps>
          <AppTile><TaskViewIcon /></AppTile>
          <AppTile><TeamsIcon /></AppTile>
          <AppTile $active $bar={16}><EdgeIcon /></AppTile>
          <AppTile><MailIcon /></AppTile>
          <AppTile><FolderIcon /></AppTile>
          <AppTile><VBoxIcon /></AppTile>
          <AppTile><StoreIcon /></AppTile>
          <AppTile $bar={6}><CodeIcon /></AppTile>
          <AppTile><ChromeIcon /></AppTile>
        </Apps>
        <Tray>
          <TrayItem $w={12} $gap={17}><Line w={10} h={6} c="#2c2729" sw={1.400}><path d="m.3 5.500 4.700-5 4.700 5" /></Line></TrayItem>
          <TrayItem $w={17} $gap={17}>
            <Line s={17} c="#1f1b1c" sw={1.300}>
              <path d="M1 7.500C1.500 3.500 4.500 1 8.300 1c3 0 5 1.500 6.300 3.500M15 .8v4h-4M6.300 15.500 2 12M2 16v-4.300h4" />
              <circle cx="12.700" cy="12.700" r="4" fill="#f98a0b" stroke="none" />
            </Line>
          </TrayItem>
          <TrayItem $w={24} $gap={19}><Stack $align="center">ENG<br />IN</Stack></TrayItem>
          <TrayItem $w={17} $gap={7}>
            <Line w={17} h={16} c="#2c2729" sw={1.200}><path d="M10.500 1H2.300C1.400 1 1 1.400 1 2.300v8.500c0 .9.400 1.300 1.300 1.300h11.500V7.500M4 15.400h8M6 12.500v2.700M10 12.500v2.700M12 1h4v4.500h-4zM14 5.500v2" /></Line>
          </TrayItem>
          <TrayItem $w={16} $gap={16}>
            <Line w={16} h={12} c="#2c2729" sw={1.200}><path d="M1 4h2.300L7 .8v10.400L3.300 8H1ZM10.500 4l4 4M14.500 4l-4 4" /></Line>
          </TrayItem>
          <TrayItem $w={63} $gap={8} $end><Stack $align="right">16:52<br />17-04-2024</Stack></TrayItem>
          <TrayItem $w={14} $gap={17}>
            <Svg w={14} h={16}><path d="M7 0c3.200 0 4.900 2.200 4.900 5v4.200l1.700 3.300H.4l1.700-3.300V5C2.100 2.200 3.800 0 7 0ZM4.800 13.500h4.400c-.6 2.300-3.800 2.300-4.400 0Z" fill="#6e2585" /></Svg>
          </TrayItem>
          <CopilotPreview />
        </Tray>
      </Taskbar>
    </Screen>
  );
}
